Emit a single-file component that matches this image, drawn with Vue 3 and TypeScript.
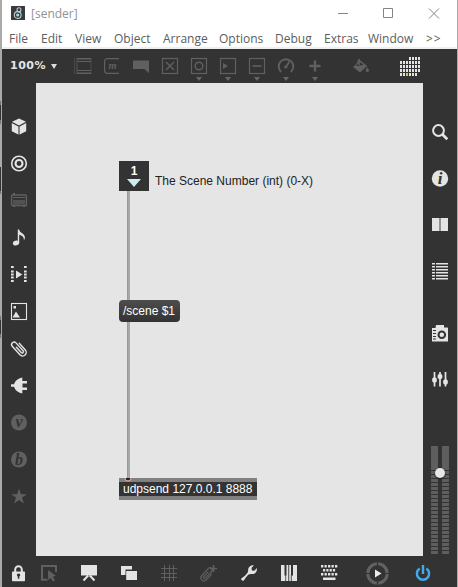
<script setup lang="ts">
interface Tool { icon: string; bright?: boolean; menu?: boolean }

const menus: { label: string; width: number }[] = [
  { label: 'File', width: 32 }, { label: 'Edit', width: 34 }, { label: 'View', width: 39 },
  { label: 'Object', width: 49 }, { label: 'Arrange', width: 56 }, { label: 'Options', width: 56 },
  { label: 'Debug', width: 49 }, { label: 'Extras', width: 44 }, { label: 'Window', width: 58 },
  { label: '>>', width: 20 },
]

const line = 'fill="none" stroke="currentColor"'
const clipShape = `<path d="M6.900 5v7.200a1.300 1.300 0 0 0 2.600 0V1.500a2.500 2.500 0 0 0-5 0V13a3.600 3.600 0 0 0 7.200 0V4" ${line} stroke-width="1.400" stroke-linecap="round"/>`

function cells(xs: number[], ys: number[], w: number, h: number): string {
  return ys.map(y => xs.map(x => `<rect x="${x}" y="${y}" width="${w}" height="${h}"/>`).join('')).join('')
}

const box = `<rect x=".5" y=".5" width="15" height="15" ${line} stroke-width="1.200"/>`

const icons: Record<string, string> = {
  object: `<path d="M-.5 0v16M16 0v16" ${line} stroke-width=".5"/><path d="M2 .7h14M2 15.300h14" ${line} stroke-width="1.400"/><path d="M2.500 3.500H16M2.500 12.500H16" ${line}/><path d="M2 0v16" ${line} stroke-width=".8"/>`,
  message: `<path d="M15 .6H3.500Q.6.600.6 3.500v9q0 2.900 2.900 2.900H15" ${line} stroke-width="1.200"/><text x="8.500" y="10.800" text-anchor="middle" font-family="Liberation Serif, serif" font-style="italic" font-weight="bold" font-size="10.500">m</text>`,
  comment: '<path d="M0 2.500h16V15.300L11.500 11H0z"/>',
  toggle: `${box}<path d="m4 4 8 8m0-8-8 8" ${line} stroke-width="1.400"/>`,
  button: `${box}<circle cx="8" cy="8" r="3.800" ${line} stroke-width="1.500"/>`,
  playlist: `${box}<path d="m3 5 5 3-5 3z"/>`,
  number: `${box}<path d="M3.500 8h9" ${line} stroke-width="1.600"/>`,
  dial: `<path d="M3.200 14A7.300 7.300 0 1 1 12.800 14" ${line} stroke-width="1.900"/><path d="m8 9 3.500-5.500" ${line} stroke-width="1.900"/><circle cx="7.700" cy="9" r="1.600"/>`,
  plus: `<path d="M8 2.500v11M2.500 8h11" ${line} stroke-width="2.400"/>`,
  bucket: `<path d="m6.500 3 7 5.500-6.500 6L0 9z"/><path d="m2.700 8 4.300-3.700L10.800 7z" fill="#333"/><path d="M4 5.500 6.300 1v6M6.300 2.500l7.500 6" ${line} stroke-width="1.200"/><path d="M14 9c.5 1.700 2 2 2 3.800a1.700 1.700 0 0 1-3.300 0C12.700 11 14 10.500 14 9z"/>`,
  cube: '<path d="m8 .5 7 3.200-7 3.900-7-3.900zM.8 5 7.300 8.500v8L.8 13.200zM15.200 5 8.700 8.500v8l6.500-3.300z"/><path d="M7.300 8.500h1.400v8H7.300z" opacity=".35"/>',
  target: `<circle cx="8" cy="8.500" r="7.300" ${line} stroke-width="1.600"/><circle cx="8" cy="8.500" r="3.500" ${line} stroke-width="2.100"/>`,
  radio: `<rect x=".6" y="3" width="14.800" height="10.500" rx=".8" ${line} stroke-width="1.400"/><path d="M2 5.500h12" ${line}/><rect x="2" y="8" width="12" height="4.500" opacity=".7"/><path d="M2 1h2v2H2zM2 13h2v2H2zM12 13h2v2h-2z"/>`,
  note: '<ellipse cx="5" cy="14" rx="3.200" ry="2.400" transform="rotate(-20 5 14)"/><path d="M6.800.5h1.400c.2 3.500 5.700 4 5.700 7.800 0 1.400-.4 2.200-1 3 .4-3-2-5-4.700-5.500V14H6.800z"/>',
  film: cells([0, 13], [0, 4.500, 7.500, 10.500, 14], 2.700, 2) + '<path d="M5 4.500 11.300 8.500 5 12.500z"/>',
  picture: `<rect x=".5" y=".5" width="15" height="16" ${line} stroke-width="1.100"/><path d="M1.500 14.500 5 8.500l4 6z"/><rect x="2.500" y="3" width="2.500" height="2.500"/>`,
  clip: `<g transform="translate(.2 .7) rotate(-42 8 8)">${clipShape}</g>`,
  plug: '<path d="M0 7.300h3C4.500 3.500 6.500 1.800 11.300.5V4H16v2.500h-4.500v4H16V13h-4.700v3.500C6.500 15.300 4.500 13.500 3 9.700H0z"/>',
  vee: '<circle cx="8" cy="8.500" r="8"/><text x="8" y="12.800" text-anchor="middle" fill="#333" font-family="Liberation Serif, serif" font-style="italic" font-weight="bold" font-size="16">v</text>',
  bee: '<circle cx="8" cy="8.500" r="8"/><text x="8" y="13.500" text-anchor="middle" fill="#333" font-family="Liberation Serif, serif" font-style="italic" font-weight="bold" font-size="16">b</text>',
  star: '<path d="m8 .5 1.900 5.700h5.900L11 9.500l1.900 5.900L8 11.900l-4.900 3.500L5 9.500.2 6.200h5.900z"/>',
  search: `<circle cx="6.500" cy="6.500" r="5.400" ${line} stroke-width="2"/><path d="m10.300 10.300 5 5" ${line} stroke-width="2.700"/>`,
  info: '<circle cx="8" cy="8.500" r="8.200"/><text x="8" y="14" text-anchor="middle" fill="#333" font-family="Liberation Serif, serif" font-style="italic" font-weight="bold" font-size="17">i</text>',
  book: '<path d="M0 1h16v13H0z"/><path d="M7 1h2v13H7z" fill="#929292"/>',
  list: cells([0], [0, 3, 6, 9, 12, 15], 3, 1.5) + cells([4], [0, 3, 6, 9, 12, 15], 12, 1.5),
  camera: '<path d="M4 0h8v2.500h3.500L16 3v13.500H0V3h3.500z"/><circle cx="9.800" cy="9.700" r="3.300" fill="none" stroke="#333" stroke-width="2"/><path d="M1 5.500h3M1 8.500h3M1 11.500h3M1 14h3" stroke="#333" stroke-width="1.200"/>',
  sliders: `<path d="M2.500 1v14.500M8 1v14.500M13.500 1v14.500" ${line} stroke-width="1.700"/><ellipse cx="2.500" cy="9" rx="2.400" ry="2.700"/><ellipse cx="8" cy="5.500" rx="2.400" ry="2.700"/><ellipse cx="13.500" cy="11" rx="2.400" ry="2.700"/>`,
  lock: `<path d="M4.200 7V4.500a3.300 3.300 0 0 1 6.600 0V7" ${line} stroke-width="2"/><rect x="1" y="6.500" width="13" height="9.800" rx=".7"/><path d="M6.800 13.800h1.500v-2l1-1.500a1.700 1.700 0 0 0-3.500 0l1 1.500z" fill="#333"/>`,
  select: `<path d="M6.500 14.800H1V1h14v6" ${line} stroke-width="2"/><path d="m7 5 .2 10 2.500-2 2.300 3.500 2-1.200-2.200-3.500 3-1z"/>`,
  present: `<path d="M0 0h16v10.500H0z"/><path d="m2.500 15.500 4.700-5M13.500 15.500l-4.700-5" ${line} stroke-width="2"/>`,
  windows: '<path d="M0 1h11v3.500H4.500V10H0z"/><path d="M5.200 6H16v9H5.200z"/>',
  grid: `<path d="M3.500 0v16M8.500 0v16M12.500 0v16M0 3.500h16M0 8.500h16M0 12.500h16" ${line}/>`,
  clipPlus: `<g transform="translate(-1 2.700) scale(.86) rotate(42 8 8)">${clipShape}</g><path d="M12.500 0v7M9 3.500h7" ${line} stroke-width="1.600"/>`,
  wrench: '<path d="M.3 13.500c3-2.300 7-5 6.900-8.500C7.200 2 10 0 12.900.3L10.500 3l.4 2.500 2.500.3L15.900 3c.6 3.800-2.200 6.600-5.700 6C7 8.500 5 12.300 2.800 15.500c-.7 1-3.600-.8-2.500-2z"/>',
  piano: '<path d="M0 0h16v16H0z"/><path d="M4.700 10v6M10.300 10v6" stroke="#333" stroke-width=".8"/><path d="M3.500 0h2v10.500h-2zM7.300 0h.9v16h-.9zM10 0h2v10.500h-2z" fill="#333"/>',
  keyboard: cells([0, 3.5, 7, 10.5, 14], [0, 8], 2.3, 2.5) + cells([2, 5.3, 8.6, 11.9], [4], 2.2, 2.5) + '<rect x="2" y="12.500" width="12.500" height="2.500"/>',
  power: `<path d="M4.700 3.500A6.100 6.100 0 1 0 11.300 3.500" ${line} stroke-width="2.400"/><path d="M8 0v9" ${line} stroke-width="2.400"/>`,
}

const topTools: Tool[] = [
  { icon: 'object' }, { icon: 'message' }, { icon: 'comment' }, { icon: 'toggle' },
  { icon: 'button', menu: true }, { icon: 'playlist', menu: true }, { icon: 'number', menu: true },
  { icon: 'dial', menu: true }, { icon: 'plus', menu: true },
]
const leftTools: Tool[] = [
  { icon: 'cube', bright: true }, { icon: 'target', bright: true }, { icon: 'radio' },
  { icon: 'note', bright: true }, { icon: 'film', bright: true }, { icon: 'picture', bright: true },
  { icon: 'clip', bright: true }, { icon: 'plug', bright: true }, { icon: 'vee' }, { icon: 'bee' }, { icon: 'star' },
]
const rightTools = ['search', 'info', 'book', 'list', 'camera', 'sliders']
const bottomTools: Tool[] = [
  { icon: 'select' }, { icon: 'present', bright: true }, { icon: 'windows', bright: true },
  { icon: 'grid' }, { icon: 'clipPlus' }, { icon: 'wrench', bright: true },
  { icon: 'piano', bright: true }, { icon: 'keyboard', bright: true },
]
const calendar = cells([9, 12, 15, 18], [0], 2, 3) + cells([0, 3, 6, 9, 12, 15, 18], [4, 8, 12], 2, 3) + cells([0, 3, 9, 12, 15], [16], 2, 3)
</script>

<template>
  <div class="desktop">
    <div class="window">
      <header class="title">
        <svg class="app" viewBox="0 0 14 14"><rect width="14" height="14" rx=".5" fill="#363b3f" /><g fill="none" stroke="#c4cccf" stroke-width="1.100"><circle cx="8" cy="3.800" r="2" /><circle cx="6.700" cy="9" r="3.400" /></g><circle cx="6.700" cy="9" r="1.600" fill="#9ddde9" /></svg>
        <span class="name">[sender]</span>
        <svg class="controls" viewBox="0 0 106 14" fill="none" stroke="#858585"><path d="M1 7.500h10M46.500 2.500h9v9h-9zM92 2.500l10 10m0-10-10 10" /></svg>
      </header>
      <nav class="menu">
        <span v-for="m in menus" :key="m.label" :style="{ width: m.width + 'px' }">{{ m.label }}</span>
      </nav>
      <div class="toolbar">
        <div class="zoom">100%<i class="caret"></i></div>
        <div class="tools">
          <div v-for="t in topTools" :key="t.icon" class="tool">
            <svg class="icon top" viewBox="0 0 16 16" v-html="icons[t.icon]"></svg>
            <i v-if="t.menu" class="drop"></i>
          </div>
        </div>
        <svg class="icon top bucket" viewBox="0 0 16 16" v-html="icons.bucket"></svg>
        <svg class="calendar" viewBox="0 0 20 19" fill="#e4e4e4"><g v-html="calendar"></g><rect x="6" y="16" width="2" height="3" fill="#e8c51c" /></svg>
      </div>
      <div class="middle">
        <aside class="left">
          <svg v-for="t in leftTools" :key="t.icon" class="icon" :class="{ bright: t.bright }" viewBox="0 0 16 17" v-html="icons[t.icon]"></svg>
        </aside>
        <main class="canvas">
          <div class="cord"></div>
          <div class="inlet">1<i></i></div>
          <div class="label">The Scene Number (int) (0-X)</div>
          <div class="msg">/scene $1</div>
          <div class="obj">udpsend 127.0.0.1 8888</div>
          <svg class="port" viewBox="0 0 8 4"><path d="M1.500 0a2.500 2.500 0 0 0 5 0z" fill="#222" /><path d="M1 0a3 3 0 0 0 6 0" fill="none" stroke="#e2a08e" stroke-width="1.100" /></svg>
        </main>
        <aside class="right">
          <svg v-for="n in rightTools" :key="n" class="icon bright" :class="n" viewBox="0 0 16 17" v-html="icons[n]"></svg>
          <div class="meter"><i></i><i></i><b></b></div>
        </aside>
      </div>
      <footer class="bottom">
        <svg class="icon bright lock" viewBox="0 0 16 17" v-html="icons.lock"></svg>
        <div class="actions">
          <svg v-for="t in bottomTools" :key="t.icon" class="icon" :class="{ bright: t.bright }" viewBox="0 0 16 17" v-html="icons[t.icon]"></svg>
        </div>
        <svg class="play" viewBox="0 0 23 23"><circle cx="11.500" cy="11.500" r="9.700" fill="none" stroke="#626262" stroke-width="3" /><path d="M11.500 0v5M11.500 18v5M0 11.500h5M18 11.500h5" stroke="#333" stroke-width="1.200" /><path d="m9 7.500 6.500 4-6.500 4z" fill="#eee" /></svg>
        <svg class="icon power" viewBox="0 0 16 17" v-html="icons.power"></svg>
      </footer>
    </div>
  </div>
</template>

<style>
body { margin: 0; overflow: hidden; }
</style>

<style scoped>
* { box-sizing: border-box; }
.desktop {
  width: 458px; height: 587px; padding: 0 1px 0 2px;
  background:
    linear-gradient(#777 0 4px, #333 4px 19px, #777 19px 23px) 0 101px / 1px 23px no-repeat,
    linear-gradient(#333 0 24px, #777 24px 27px) 0 167px / 1px 27px no-repeat,
    linear-gradient(#777 0 4px, #333 4px 18px, #777 18px 22px) 0 316px / 1px 22px no-repeat,
    #aaa;
}
.window { width: 455px; height: 587px; display: flex; flex-direction: column; background: #333; }
svg { display: block; flex: none; overflow: visible; }
.title { height: 27px; flex: none; display: flex; align-items: center; padding-left: 9px; background: #fff; font: 12px/27px "Open Sans", sans-serif; color: #929292; }
.app { width: 14px; height: 14px; margin-top: -1px; }
.name { width: 80px; margin-left: 6px; letter-spacing: -.4px; }
.title .name { letter-spacing: 0; }
.controls { width: 106px; height: 14px; margin: -1px 0 0 226px; }
.menu { height: 22px; flex: none; display: flex; padding-left: 7px; background: #fff; border-bottom: 2px solid #eeeff1; font: 12px/23px "Open Sans", sans-serif; color: #5c5c5c; white-space: nowrap; }
.menu span { flex: none; }
.menu span:last-child { letter-spacing: 1px; }
.toolbar { height: 34px; flex: none; display: flex; align-items: flex-start; padding: 9px 0 0 8px; }
.zoom { width: 65px; height: 16px; display: flex; align-items: center; color: #e6e6e6; font: bold 11px/16px "DejaVu Sans", sans-serif; letter-spacing: .5px; }
.caret { margin-left: 5px; border: 3.5px solid transparent; border-top: 5px solid #ddd; border-bottom: 0; }
.tools { display: flex; gap: 13px; }
.tool { width: 16px; display: flex; flex-direction: column; align-items: center; gap: 3px; }
.drop { border: 3.5px solid transparent; border-top: 4px solid #666; border-bottom: 0; }
.icon { width: 16px; height: 17px; color: #606060; fill: currentColor; }
.icon.top { height: 16px; color: #606060; }
.icon.bright { color: #e4e4e4; }
.bucket { margin-left: 30px; }
.calendar { width: 20px; height: 19px; margin: -1px 0 0 31px; }
.middle { height: 473px; flex: none; display: flex; }
.left { width: 34px; display: flex; flex-direction: column; gap: 20px; padding: 35px 0 0 9px; }
.right { width: 34px; display: flex; flex-direction: column; padding: 41px 0 0 9px; }
.info { margin-top: 29px; }
.book { margin-top: 30px; }
.list { margin-top: 29px; }
.camera { margin-top: 45px; }
.sliders { margin-top: 29px; }
.meter { position: relative; display: flex; gap: 4px; width: 18px; height: 108px; margin: 58px 0 0 -1px; }
.meter i { width: 7px; height: 108px; background: linear-gradient(#5e5e5e 0 24px, transparent 24px), repeating-linear-gradient(#333 0 1px, #5e5e5e 1px 4px); }
.meter b { position: absolute; left: 4px; top: 22px; width: 10px; height: 10px; border-radius: 50%; background: #e8e8e8; box-shadow: 0 1px 2px #222; }
.canvas { position: relative; width: 387px; background: #e5e5e5; font: 12px/20px "Liberation Sans", sans-serif; white-space: nowrap; }
.canvas > * { position: absolute; }
.cord { left: 91px; top: 105px; width: 3px; height: 292px; background: #a8a8a8; border-left: 1px solid #999; }
.inlet { left: 83px; top: 78px; width: 30px; height: 30px; padding-top: 3px; background: #333; color: #fff; font-weight: bold; line-height: 14px; text-align: center; }
.inlet i { display: block; width: 0; margin: 1px auto 0; border: 7.5px solid transparent; border-top: 8px solid #cdecef; border-bottom: 0; }
.label { left: 119px; top: 88px; color: #222; }
.msg { left: 83px; top: 217px; width: 61px; height: 22px; padding-left: 4px; border-radius: 4px; background: linear-gradient(#4d4d4d, #333); color: #fff; line-height: 22px; }
.obj { left: 83px; top: 395px; width: 138px; height: 22px; padding-left: 4px; border: solid #808080; border-width: 4px 0; background: #333; color: #fff; line-height: 14px; }
.port { left: 88px; top: 395px; width: 8px; height: 4px; }
.bottom { height: 31px; display: flex; align-items: flex-start; padding: 9px 0 0 9px; }
.actions { display: flex; gap: 24px; margin-left: 14px; }
.play { width: 23px; height: 23px; margin: -3px 0 0 28.5px; }
.power { margin-left: 26.5px; color: #43a9e8; }
</style>
